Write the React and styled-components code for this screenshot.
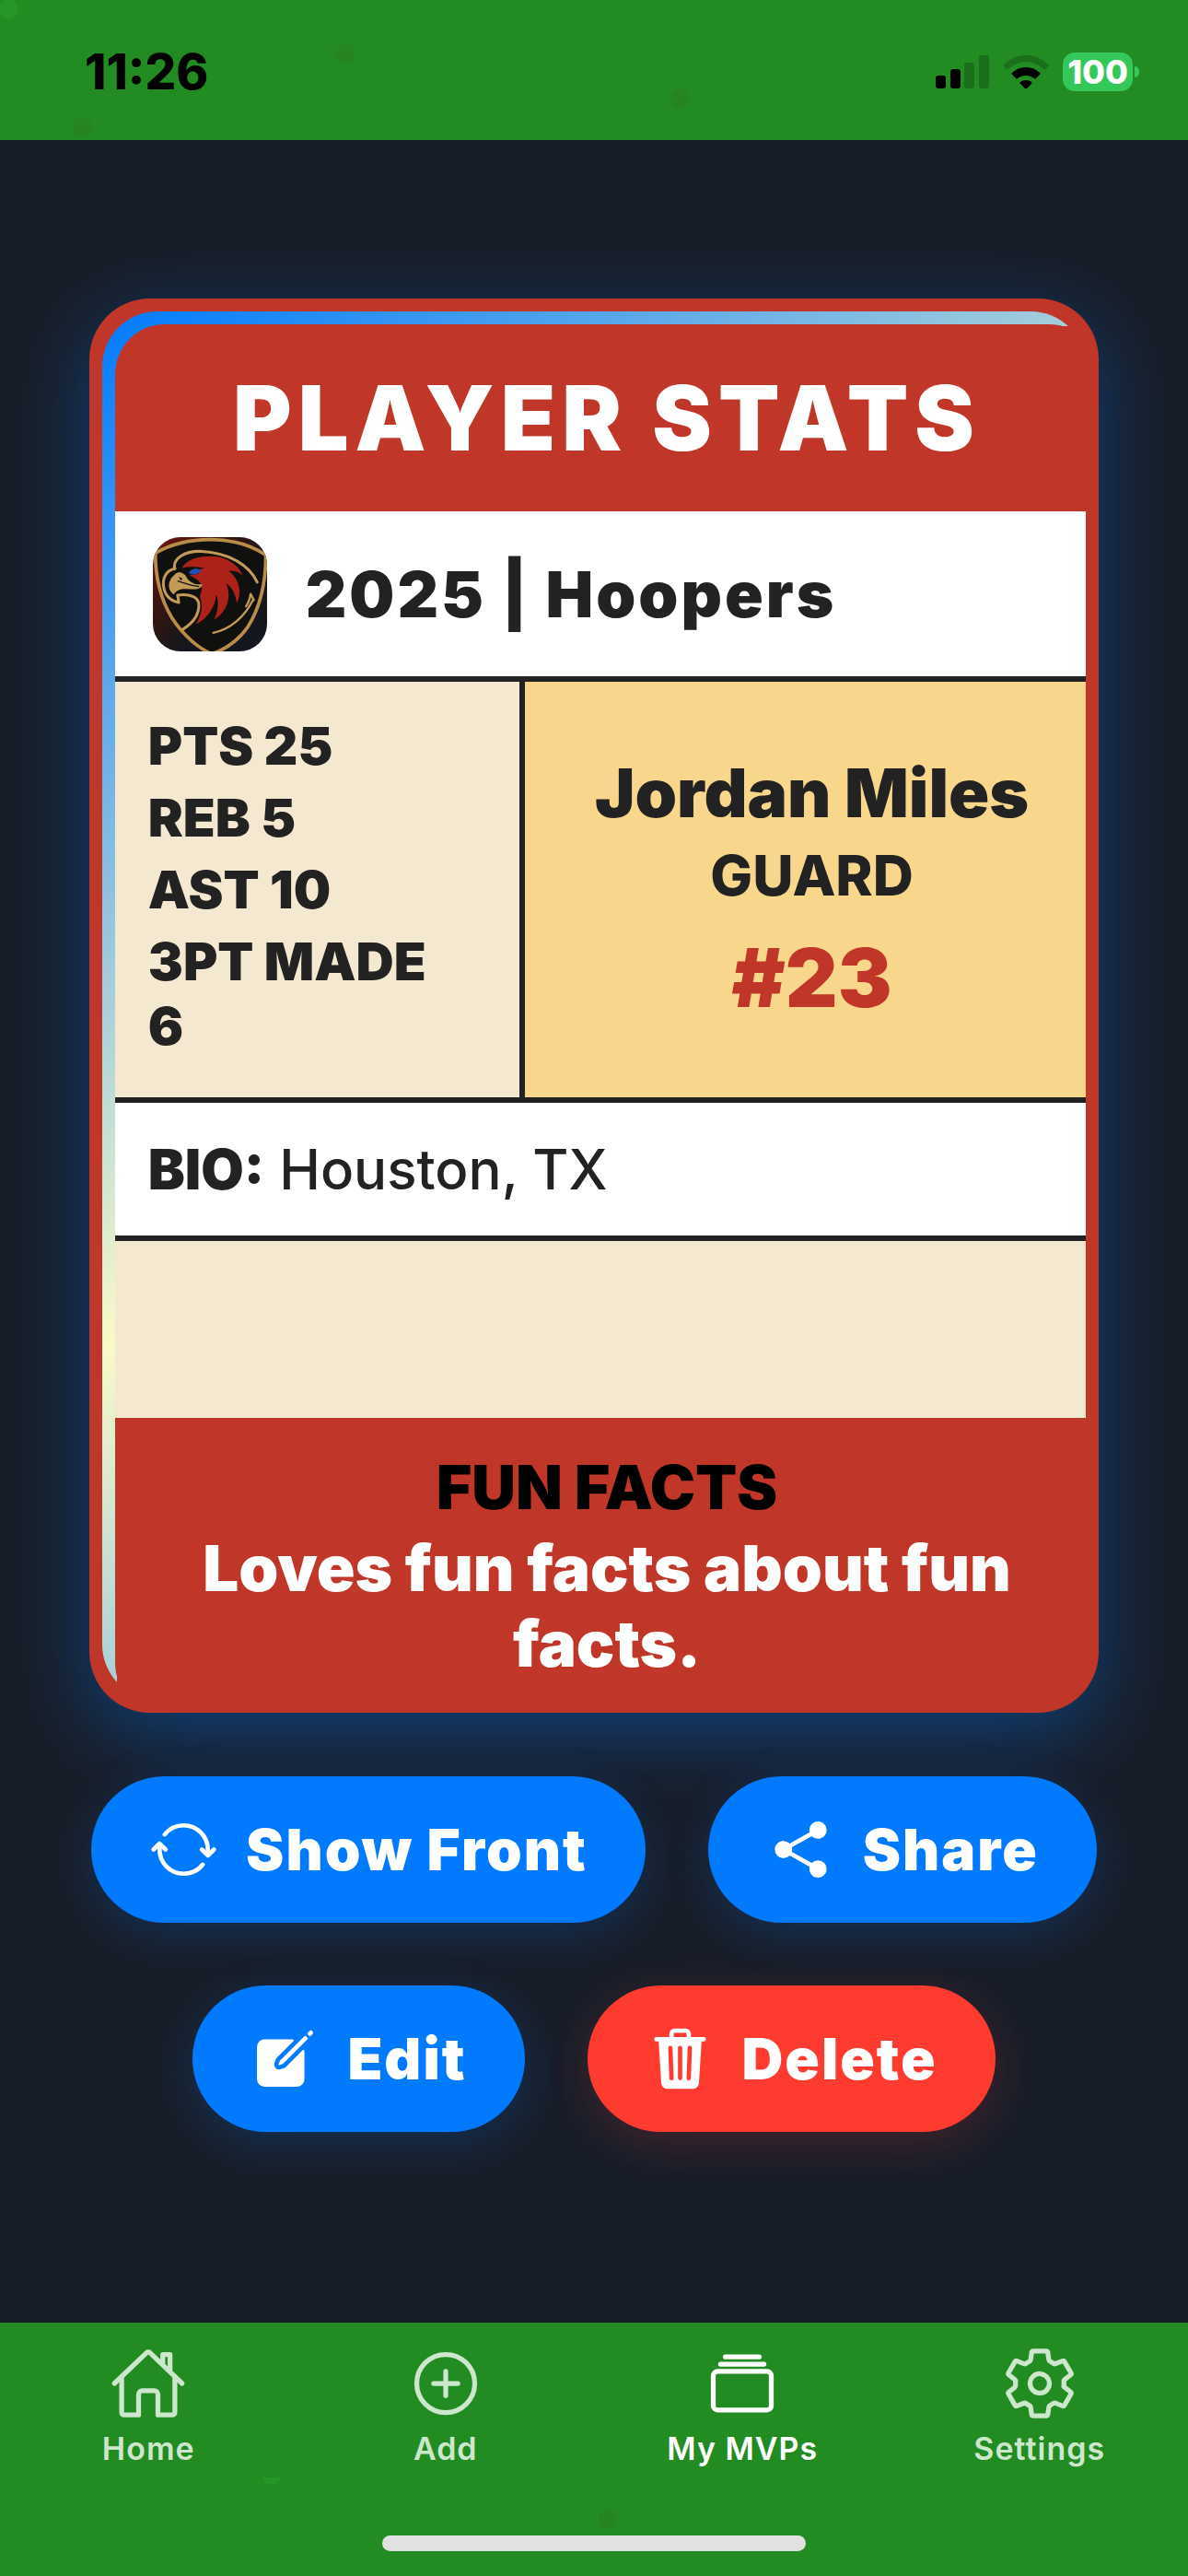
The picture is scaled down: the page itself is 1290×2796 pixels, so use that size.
import React from 'react';
import styled, { createGlobalStyle } from 'styled-components';
import {
  IoAddCircleOutline,
  IoAlbumsOutline,
  IoCreate,
  IoHomeOutline,
  IoSettingsOutline,
  IoShareSocial,
  IoSyncOutline,
  IoTrash,
} from 'react-icons/io5';

const stats = ['PTS 25', 'REB 5', 'AST 10', '3PT MADE 6'];

const tabs = [
  { label: 'Home', icon: IoHomeOutline },
  { label: 'Add', icon: IoAddCircleOutline },
  { label: 'My MVPs', icon: IoAlbumsOutline, active: true },
  { label: 'Settings', icon: IoSettingsOutline },
];

const SignalIcon = () => (
  <svg width="58" height="36" viewBox="0 0 58 36" aria-hidden="true">
    <rect x="0" y="22" width="11" height="14" rx="3" />
    <rect x="16" y="15" width="11" height="21" rx="3" />
    <rect x="31" y="8" width="11" height="28" rx="3" opacity="0.2" />
    <rect x="47" y="0" width="11" height="36" rx="3" opacity="0.2" />
  </svg>
);

const WifiIcon = () => (
  <svg width="50" height="36" viewBox="0 0 50 36" aria-hidden="true">
    <path d="M25 0C35 0 43 4 49 10Q50 11 49 12L46 15Q45 16 44 15C39 10 32 7 25 7S11 10 6 15Q5 16 4 15L1 12Q0 11 1 10C7 4 15 0 25 0Z" opacity="0.2" />
    <path d="M25 13C31 13 36 15 40 19Q41 20 40 21L36 25Q35 26 34 25C31 23 28 22 25 22S19 23 16 25Q15 26 14 25L10 21Q9 20 10 19C14 15 19 13 25 13Z" />
    <path d="M25 27C28 27 30 28 31 29Q32 30 31 31L26 36Q25 37 24 36L19 31Q18 30 19 29C20 28 22 27 25 27Z" />
  </svg>
);

const TeamLogo = () => (
  <svg viewBox="0 0 370 370" role="img" aria-label="Hoopers logo">
    <defs>
      <linearGradient id="logoBack" x1="0" y1="0" x2="1" y2="1">
        <stop offset="0" stopColor="#6e1712" />
        <stop offset="0.35" stopColor="#351510" />
        <stop offset="0.6" stopColor="#15171c" />
        <stop offset="1" stopColor="#14161e" />
      </linearGradient>
    </defs>
    <rect width="370" height="370" fill="url(#logoBack)" />
    <path
      d="M8 52C60 22 120 8 186 8C252 8 315 24 366 58C366 140 352 220 308 290C275 338 232 364 192 378C150 362 98 318 62 262C22 196 8 130 8 52Z"
      fill="#10110e"
      stroke="#b98d48"
      strokeWidth="11"
    />
    <g fill="none" stroke="#c39a58" strokeWidth="9" strokeLinecap="round" strokeLinejoin="round">
      <path d="M70 100C66 70 100 44 158 46C245 50 312 90 338 146" />
      <path d="M72 102C42 106 30 136 35 162C39 186 55 206 84 212L80 188C120 182 148 194 149 218C150 252 130 278 98 298" />
      <path d="M196 310C256 298 300 252 323 206L327 204L317 184C314 200 310 212 302 224" strokeWidth="7" />
    </g>
    <path
      d="M94 100C108 74 150 56 215 64C248 72 278 92 291 124C276 112 262 107 246 110C276 132 292 172 272 214C268 188 260 166 238 150C256 196 240 242 198 268C213 236 214 210 205 186C202 226 180 262 140 282C157 250 162 226 155 204C148 186 162 176 158 158C152 140 136 132 118 124L150 118L136 108L168 100C140 96 116 94 94 100Z"
      fill="#ad2218"
    />
    <path
      d="M72 120C84 108 104 116 110 132C124 150 142 156 160 152C158 170 138 170 110 168C88 166 74 174 68 186C46 172 46 140 72 120Z"
      fill="#c39a58"
    />
    <path d="M80 142C100 148 126 158 150 160" fill="none" stroke="#10110e" strokeWidth="4" />
    <path d="M84 128L96 134L90 140Z" fill="#10110e" />
    <path d="M116 116C124 102 142 98 156 108C146 122 130 124 116 116Z" fill="#1f50bd" />
  </svg>
);

const App = () => {
  return (
    <Page>
      <GlobalStyle />
      <StatusBar>
        <time>11:26</time>
        <StatusIcons>
          <SignalIcon />
          <WifiIcon />
          <Battery>100</Battery>
        </StatusIcons>
      </StatusBar>

      <Main>
        <Card>
          <Foil>
            <CardBack>
              <Title>PLAYER STATS</Title>
              <TeamRow>
                <TeamLogo />
                <h2>2025 | Hoopers</h2>
              </TeamRow>
              <Details>
                <StatList>
                  {stats.map((stat) => <li key={stat}>{stat}</li>)}
                </StatList>
                <Player>
                  <h2>Jordan Miles</h2>
                  <h3>GUARD</h3>
                  <p>#23</p>
                </Player>
              </Details>
              <Bio><strong>BIO:</strong> Houston, TX</Bio>
              <Spacer />
              <FunFacts>
                <h3>FUN FACTS</h3>
                <p>Loves fun facts about fun facts.</p>
              </FunFacts>
            </CardBack>
          </Foil>
        </Card>

        <Actions>
          <ActionButton type="button"><IoSyncOutline />Show Front</ActionButton>
          <ActionButton type="button"><IoShareSocial />Share</ActionButton>
          <ActionButton type="button"><IoCreate />Edit</ActionButton>
          <ActionButton type="button" $danger><IoTrash />Delete</ActionButton>
        </Actions>
      </Main>

      <Footer>
        <TabBar aria-label="Main">
          {tabs.map(({ label, icon: Icon, active }) => (
            <Tab key={label} href="#" $active={active} aria-current={active ? 'page' : undefined}>
              <Icon />
              {label}
            </Tab>
          ))}
        </TabBar>
        <HomeIndicator />
      </Footer>
    </Page>
  );
};

const GlobalStyle = createGlobalStyle`
  *, *::before, *::after {
    box-sizing: border-box;
  }
  body, h1, h2, h3, p, ul {
    margin: 0;
    padding: 0;
  }
  body {
    background: #181e29;
    font-family: Inter, "Liberation Sans", sans-serif;
  }
`;

const Page = styled.div`
  display: flex;
  flex-direction: column;
  min-height: 100vh;
`;

/* faint grass specks sit behind both green bars */
const StatusBar = styled.header`
  display: flex;
  align-items: center;
  justify-content: space-between;
  height: 152px;
  padding: 4px 52px 0 92px;
  background:
    radial-gradient(circle at 9px 10px, #279628 10px, transparent 11px),
    radial-gradient(circle at 375px 58px, #268520 10px, transparent 11px),
    radial-gradient(circle at 739px 107px, #268520 10px, transparent 11px),
    radial-gradient(circle at 89px 138px, #268520 10px, transparent 11px),
    #228b22;
  color: #000;

  time {
    font-size: 53px;
    font-weight: 800;
    line-height: 60px;
  }
`;

const StatusIcons = styled.div`
  display: flex;
  align-items: center;
  gap: 15px;
`;

const Battery = styled.span`
  display: flex;
  align-items: center;
  justify-content: center;
  position: relative;
  width: 76px;
  height: 42px;
  margin-right: 8px;
  border-radius: 13px;
  background: #34c759;
  color: #fff;
  font-size: 36px;
  font-weight: 800;

  &::after {
    content: "";
    position: absolute;
    left: 78px;
    top: 15px;
    width: 5px;
    height: 12px;
    border-radius: 0 5px 5px 0;
    background: #34c759;
  }
`;

const Main = styled.main`
  display: flex;
  flex: 1;
  flex-direction: column;
  align-items: center;
  gap: 69px;
  padding: 172px 0 120px;
`;

const Card = styled.article`
  display: flex;
  width: 85%;
  aspect-ratio: 5 / 7;
  padding: 14px;
  border-radius: 66px;
  background: #c0372a;
  box-shadow: 0 24px 84px rgba(0, 122, 255, 0.36);
`;

/* the red layers keep the foil from fringing round the corners it is hidden in */
const Foil = styled.div`
  display: flex;
  flex: 1;
  overflow: hidden;
  border-radius: 60px;
  background:
    linear-gradient(#c0372a, #c0372a) 70px 16px no-repeat,
    linear-gradient(#c0372a, #c0372a) 16px 70px no-repeat,
    linear-gradient(145deg, #007aff, #fafac8 50%, #007aff);
`;

/* pushed down and right, so the foil only shows on two sides */
const CardBack = styled.div`
  display: flex;
  flex: 1;
  flex-direction: column;
  margin: 14px -14px -14px 14px;
  overflow: hidden;
  border-radius: 54px;
  background: #c0372a;
  color: #222;
`;

const Title = styled.h1`
  padding: 42px 36px;
  color: #fff;
  font-size: 97px;
  font-weight: 900;
  letter-spacing: 7px;
  line-height: 119px;
  text-align: center;
`;

const TeamRow = styled.div`
  display: flex;
  align-items: center;
  gap: 42px;
  padding: 28px 41px 27px;
  border-bottom: 6px solid #222;
  background: #fff;

  svg {
    width: 124px;
    height: 124px;
    border-radius: 30px;
  }
  h2 {
    font-size: 69px;
    font-weight: 900;
    letter-spacing: 3px;
    line-height: 84px;
  }
`;

const Details = styled.div`
  display: grid;
  grid-template-columns: 5fr 7fr;
  border-bottom: 6px solid #222;
`;

const StatList = styled.ul`
  display: flex;
  flex-direction: column;
  gap: 8px;
  padding: 35px 66px 42px 36px;
  border-right: 6px solid #222;
  background: #f5e8d0;
  font-size: 57px;
  font-weight: 900;
  line-height: 70px;
  list-style: none;
`;

const Player = styled.div`
  display: flex;
  flex-direction: column;
  align-items: center;
  justify-content: center;
  background: #f8d78c;

  h2 {
    font-size: 73px;
    font-weight: 900;
    line-height: 86px;
  }
  h3 {
    margin-top: 10px;
    font-size: 61px;
    font-weight: 800;
    line-height: 72px;
  }
  p {
    margin-top: 23px;
    color: #c0372a;
    font-size: 88px;
    font-weight: 900;
    line-height: 104px;
  }
`;

const Bio = styled.p`
  padding: 36px;
  border-bottom: 6px solid #222;
  background: #fff;
  font-size: 60px;
  font-weight: 500;
  line-height: 72px;

  strong {
    font-weight: 900;
  }
`;

const Spacer = styled.div`
  flex: 1;
  background: #f5e8d0;
`;

const FunFacts = styled.section`
  padding: 36px 36px 34px;
  text-align: center;

  h3 {
    color: #000;
    font-size: 66px;
    font-weight: 900;
    line-height: 78px;
  }
  p {
    margin-top: 8px;
    color: #fff;
    font-size: 69px;
    font-weight: 900;
    line-height: 82px;
  }
`;

const Actions = styled.div`
  display: flex;
  flex-wrap: wrap;
  justify-content: center;
  gap: 68px;
  padding: 0 60px;
`;

const ActionButton = styled.button`
  display: flex;
  align-items: center;
  gap: 30px;
  height: 159px;
  padding: 0 63px;
  border: 0;
  border-radius: 80px;
  background: ${({ $danger }) => ($danger ? '#ff3b30' : '#007aff')};
  box-shadow: 0 12px 48px ${({ $danger }) => ($danger ? 'rgba(255, 59, 48, 0.18)' : 'rgba(0, 122, 255, 0.2)')};
  color: #fff;
  cursor: pointer;
  font-family: inherit;
  font-size: 62px;
  font-weight: 900;
  letter-spacing: 2px;

  svg {
    width: 75px;
    height: 75px;
  }
`;

const Footer = styled.footer`
  display: flex;
  flex-direction: column;
  align-items: center;
  justify-content: space-between;
  height: 275px;
  padding: 24px 0 27px;
  background:
    linear-gradient(#228b22, #228b22) 0 0 / 100% 168px no-repeat,
    radial-gradient(circle at 295px 165px, #279628 10px, transparent 11px),
    radial-gradient(circle at 660px 213px, #268520 10px, transparent 11px),
    #228b22;
`;

const TabBar = styled.nav`
  display: grid;
  grid-template-columns: repeat(4, 1fr);
  width: 100%;
`;

const Tab = styled.a`
  display: flex;
  flex-direction: column;
  align-items: center;
  gap: 9px;
  color: ${({ $active }) => ($active ? '#fff' : '#cde7cd')};
  font-size: 34px;
  font-weight: 600;
  letter-spacing: 1px;
  line-height: 40px;
  text-decoration: none;

  svg {
    width: 84px;
    height: 84px;
  }
`;

const HomeIndicator = styled.div`
  width: 460px;
  height: 17px;
  border-radius: 9px;
  background: #e1e1e1;
`;

export default App;
